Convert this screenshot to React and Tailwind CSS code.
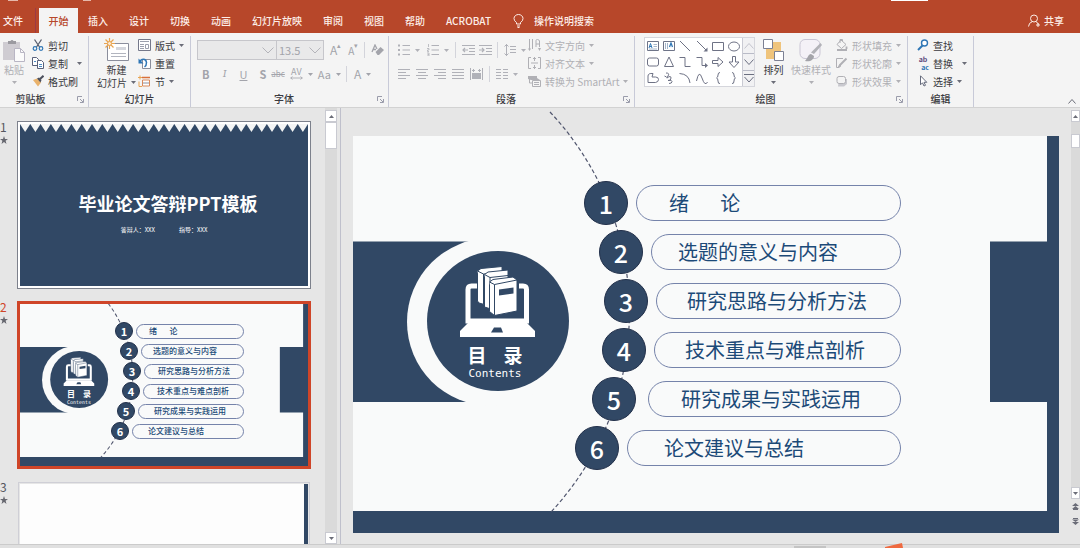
import React from "react";
import clsx from "clsx";

const TABS = ["插入", "设计", "切换", "动画", "幻灯片放映", "审阅", "视图", "帮助", "ACROBAT"];

// one entry per agenda line, with its place on the large slide and on the thumbnail
const AGENDA = [
  { text: "绪       论", row: "pl-[231px]", pill: "ml-2 pl-[32px]", miniRow: "pl-[95px]", miniPill: "pl-[12px]" },
  { text: "选题的意义与内容", row: "pl-[246px]", pill: "ml-2 pl-[26px]", miniRow: "pl-[100px]", miniPill: "pl-[11px]" },
  { text: "研究思路与分析方法", row: "pl-[251px]", pill: "ml-2 pl-[30px]", miniRow: "pl-[103px]", miniPill: "pl-[13px]" },
  { text: "技术重点与难点剖析", row: "pl-[249px]", pill: "ml-2 pl-[30px]", miniRow: "pl-[102px]", miniPill: "pl-[13px]" },
  { text: "研究成果与实践运用", row: "pl-[239px]", pill: "ml-3 pl-[32px]", miniRow: "pl-[97px]", miniPill: "pl-[15px]" },
  { text: "论文建议与总结", row: "pl-[222px]", pill: "ml-2 pl-[36px]", miniRow: "pl-[91px]", miniPill: "pl-[15px]" },
];

/* ---------- icons ---------- */

const Icon = ({ w = 12, h = 12, className, children }) => (
  <svg
    width={w}
    height={h}
    viewBox={`0 0 ${w} ${h}`}
    fill="none"
    stroke="currentColor"
    className={clsx("shrink-0", className)}
    aria-hidden="true"
  >
    {children}
  </svg>
);

const Caret = ({ className }) => (
  <Icon w={5} h={3} className={className}>
    <path d="M0 0h5L2.5 3z" fill="currentColor" stroke="none" />
  </Icon>
);

const CaretUp = () => (
  <Icon w={5} h={3}>
    <path d="M0 3h5L2.5 0z" fill="currentColor" stroke="none" />
  </Icon>
);

const PasteIcon = () => (
  <Icon w={24} h={25}>
    <path d="M1 4h17v18H1z" fill="#cfccd2" stroke="none" />
    <path d="M6 3h2.500a1.600 1.600 0 0 1 3 0H14v3H6z" fill="#9b9aa0" stroke="none" />
    <path d="M12.500 10.500h6l4 4v9h-10z" fill="#fbfbfb" stroke="#b9b6c4" />
    <path d="M18.500 10.500v4h4" stroke="#b9b6c4" />
  </Icon>
);

const CutIcon = () => (
  <Icon>
    <path d="M2.500 0.500 7.500 8M9.500 0.500 4.500 8" stroke="#5a6070" strokeWidth="1.300" />
    <circle cx="3" cy="9.500" r="1.800" stroke="#2f76b5" strokeWidth="1.200" />
    <circle cx="9" cy="9.500" r="1.800" stroke="#2f76b5" strokeWidth="1.200" />
  </Icon>
);

const CopyIcon = () => (
  <Icon>
    <path d="M.5.5h4l2 2v6h-6z" fill="#fff" stroke="#59617a" />
    <path d="M5.500 3.500h4l2 2v6h-6z" fill="#fff" stroke="#59617a" />
    <path d="M7 7.500h3M7 9.500h3M2 4.500h2" stroke="#4d8bc4" />
  </Icon>
);

const BrushIcon = () => (
  <Icon>
    <path d="M1 5 5 3.500 9 7.500 6 11.500z" fill="#e9b26b" stroke="none" />
    <path d="M5 3.500 7 2.500l2.500 2.500L8.500 7.500z" fill="#4b4f5c" stroke="none" />
    <path d="M8 4 11.500.8" stroke="#4b4f5c" strokeWidth="2" />
  </Icon>
);

const NewSlideIcon = () => (
  <Icon w={26} h={25}>
    <path d="M3.500 5.500h21v17h-21z" fill="#fff" stroke="#8b8e9c" />
    <path d="M12 9h10v3H12z" fill="#d5d7dd" stroke="none" />
    <path d="M7 15.500h15M7 18.500h15" stroke="#b2b5bf" />
    <path d="M5.500 0v11M0 5.500h11M1.500 1.500l8 8M9.500 1.500l-8 8" stroke="#e9a552" strokeWidth="1.200" />
    <circle cx="5.500" cy="5.500" r="2" fill="#fbe8cf" stroke="#e9a552" />
  </Icon>
);

const LayoutIcon = () => (
  <Icon w={13}>
    <path d="M.5.5h12v11H.5z" fill="#fff" stroke="#74788a" />
    <path d="M2 2.500h9M2 5.500h4M2 7.500h4M2 9.500h4" stroke="#9ca0ad" />
    <path d="M7.500 5.500h3v4h-3z" stroke="#9ca0ad" />
  </Icon>
);

const ResetIcon = () => (
  <Icon w={13}>
    <path d="M4.500 2.500h8v9h-8z" fill="#fff" stroke="#8b8e9c" />
    <path d="M2 5C3 1.500 8 1 8.500 5.500 8.500 7.500 8 9 6.500 10" stroke="#2f76b5" strokeWidth="1.500" />
    <path d="M.5 1.500v5h5z" fill="#2f76b5" stroke="none" />
  </Icon>
);

const SectionIcon = () => (
  <Icon w={13}>
    <path d="M4 2.500h8" stroke="#d9703c" strokeWidth="1.500" />
    <path d="M4.500 5h7v6h-7z" fill="#fff" stroke="#d98a5c" />
    <path d="M5 8h6" stroke="#8b8e9c" />
    <path d="M0 2.500h4M2 .5v4M1 6.500v5h3" stroke="#e9a552" />
  </Icon>
);

const EraserIcon = () => (
  <Icon w={13}>
    <path d="M1 8 4 1l2 4M2 5.500h3" strokeWidth="1.300" />
    <path d="m4.500 8 5-5L13 6l-5 5H6.500z" fill="currentColor" stroke="none" />
  </Icon>
);

const BulletsIcon = () => (
  <Icon>
    <path d="M4.500 1.500H12M4.500 6H12M4.500 10.500H12" />
    <path d="M0 1.500h2M0 6h2M0 10.500h2" strokeWidth="2" />
  </Icon>
);

const NumbersIcon = () => (
  <Icon>
    <path d="M4.500 1.500H12M4.500 6H12M4.500 10.500H12" />
    <path d="M1.500 0v3M0 4.500h2v1.500H.5v1.500H2M0 9h2v3H0M.5 10.500H2" strokeWidth=".8" />
  </Icon>
);

const IndentIcon = ({ out }) => (
  <Icon w={13}>
    <path d="M0 1.500h13M7 4.500h6M7 7.500h6M0 10.500h13" />
    <path d={out ? "M6 6H1M3 4 1 6l2 2" : "M0 6h5M3 4l2 2-2 2"} strokeWidth="1.200" />
  </Icon>
);

const SpacingIcon = () => (
  <Icon>
    <path d="M6 2.500h6M6 5.500h6M6 8.500h6" />
    <path d="M2.500 0v12M.5 2.500l2-2 2 2M.5 9.500l2 2 2-2" />
  </Icon>
);

const ALIGN_PATHS = {
  left: "M0 1.500h12M0 4.500h8M0 7.500h12M0 10.500h8",
  center: "M0 1.500h12M2 4.500h8M0 7.500h12M2 10.500h8",
  right: "M0 1.500h12M4 4.500h8M0 7.500h12M4 10.500h8",
  justify: "M0 1.500h12M0 4.500h12M0 7.500h12M0 10.500h12",
  columns: "M0 1.500h5M7 1.500h5M0 4.500h5M7 4.500h5M0 7.500h5M7 7.500h5M0 10.500h5M7 10.500h5",
};

const AlignIcon = ({ kind }) => (
  <Icon>
    <path d={ALIGN_PATHS[kind]} />
  </Icon>
);

const DistributeIcon = () => (
  <Icon w={13}>
    <path d="M.5 0v12M12.500 0v12M2 2.500h3M8 2.500h3M3.500 1v3M9.500 1v3" />
    <path d="M2 5h9v6H2z" fill="currentColor" stroke="none" />
  </Icon>
);

const TextDirIcon = () => (
  <Icon w={13}>
    <path d="M1.500 0v10M4.500 0v10M8 8V1.500Q8 .5 9.500.5T11.500 2v6M8 5h3.500" />
    <path d="M0 9.500h3L1.500 12zM10 9h3l-1.500 3z" fill="currentColor" stroke="none" />
  </Icon>
);

const AlignTextIcon = () => (
  <Icon w={13}>
    <path d="M3 .5H.5v11H3M10 .5h2.500v11H10" />
    <path d="M6.500 0v4M5 2l1.500-1.500L8 2M6.500 12V8M5 10l1.500 1.500L8 10M3 6h7" />
  </Icon>
);

const SmartArtIcon = () => (
  <Icon w={13}>
    <path d="M0 1h9v2l3 2H3L0 4z" fill="currentColor" stroke="none" />
    <path d="M4.500 5.500h8v6h-8z" fill="#f4f4f4" />
    <path d="M6 7.500h5M6 9.500h5M1.500 4v4H4" />
  </Icon>
);

const ArrangeIcon = () => (
  <Icon w={23} h={25}>
    <path d="M4 4h15v17H4z" fill="#efc47c" stroke="none" />
    <path d="M1.500 1.500h9v9h-9zM12.500 13.500h9v9h-9z" fill="#fff" stroke="#7c8092" />
  </Icon>
);

const QuickStyleIcon = () => (
  <Icon w={24} h={25}>
    <rect x="1" y="1.500" width="20" height="19" rx="5" fill="#f4f1f7" stroke="#c9c5d4" />
    <path d="m23 7-8 9-3-1.500L21.500 5z" fill="#b2b2b8" stroke="none" />
    <path d="M12 16c-3 0-3 4-6 7 5 1 9-1 9-5z" fill="#a4a4aa" stroke="none" />
  </Icon>
);

const FillIcon = () => (
  <Icon>
    <path d="m5 1 5 4.500-4.500 4L1 5.500zM4 4V.5h2.500V2" />
    <path d="M10.500 7.500V10M1 11h10" strokeWidth="1.800" />
  </Icon>
);

const OutlineIcon = () => (
  <Icon>
    <path d="M7 1.500H.5v9h3" />
    <path d="m4 8 6.500-6.500" strokeWidth="2" />
    <path d="m2.500 10 1-2.500L5 9z" fill="currentColor" />
  </Icon>
);

const EffectIcon = () => (
  <Icon>
    <path d="M3 4h8v5l-3 2.500H2z" fill="#c9c9cf" stroke="none" />
    <rect x="1" y="1.500" width="8.500" height="7" rx="2" fill="#f4f4f4" />
  </Icon>
);

const FindIcon = () => (
  <Icon>
    <circle cx="7.500" cy="4" r="3" stroke="#2f76b5" strokeWidth="1.400" fill="#fff" />
    <path d="M5.500 6.500 1 11" stroke="#2f76b5" strokeWidth="2" />
  </Icon>
);

const ReplaceIcon = () => (
  <span className="flex w-3 shrink-0 flex-col text-[7px] font-bold leading-[8px]" aria-hidden="true">
    <span className="text-[#5d4a7c]">ab</span>
    <span className="self-end text-[#2f76b5]">ac</span>
  </span>
);

const SelectIcon = () => (
  <Icon>
    <path d="M3.500.8v9l2-2L7 11l1.500-.7L7 7.300h2.800z" fill="#fff" stroke="#666b7c" />
  </Icon>
);

const GALLERY = [
  <><path d="M.5 1.500h11v9H.5z" stroke="#6e7488" /><path d="M2 8 3.500 3.500 5 8M2.500 6.500h2" stroke="#2f76b5" /><path d="M6.500 4.500H10M6.500 6.500H10M2 9h8" stroke="#8fa3be" strokeWidth=".8" /></>,
  <><path d="M.5 1.500h11v9H.5z" stroke="#6e7488" /><path d="M6.500 7 8 3l1.500 4" stroke="#2f76b5" strokeWidth="1.300" /><path d="M2.500 3v6M4.500 3v6" stroke="#8fa3be" strokeWidth=".8" /></>,
  <path d="m1 1 10 10" />,
  <><path d="m1 1 9 9" /><path d="M11.500 11.500v-4l-4 4z" fill="currentColor" stroke="none" /></>,
  <path d="M.5 2.500h11v8H.5z" />,
  <ellipse cx="6" cy="6.500" rx="5.500" ry="4.500" />,
  <rect x=".5" y="2" width="11" height="8" rx="2" />,
  <path d="m6 1 4.500 9.500h-9z" />,
  <path d="M.5 1.500H6v9h5.500" />,
  <><path d="M.5 1.500H6v8h4" /><path d="m9 7 3 2.500-3 2.500z" fill="currentColor" stroke="none" /></>,
  <path d="M.5 4.500H6V1.500l5 4.500-5 4.500V7.500H.5z" />,
  <path d="M4.500.5V6H1l5 5.500L11 6H7.500V.5z" />,
  <path d="M1 10.500V4Q1 1 6 1.500L5 5h3.500q3 0 3 2.500t-3 3z" />,
  <path d="M3 1q4 0 2 3T4 6q4-3 4 0T5 8.500q4-1 4 1T6 11.500M1.500 4l2 1" />,
  <path d="M.5 1.500Q10 2 11 11" />,
  <path d="M.5 9Q3-3 6 6t5.500 4" />,
  <path d="M8 .5Q6 .5 6 3t-1.500 3Q6 6 6 9t2 2.500" />,
  <path d="M4 .5Q6 .5 6 3t1.500 3Q6 6 6 9t-2 2.500" />,
];

/* ---------- ribbon ---------- */

const RibbonGroup = ({ label, width, launcher = true, labelClass, children }) => (
  <section aria-label={label} className={clsx("flex shrink-0 flex-col border-r border-[#c8cad8]", width)}>
    <div className="flex h-[57px] items-start">{children}</div>
    <div className="flex h-3 items-center">
      <h2 className={clsx("flex-1 text-center font-medium leading-3", labelClass)}>{label}</h2>
      {launcher && (
        <button aria-label={`${label}设置`} className="mr-1 text-[#9a9cab]">
          <Icon w={7} h={7}>
            <path d="M.5 5V.5H5M3 3l3 3M6.500 3v3.500H3" />
          </Icon>
        </button>
      )}
    </div>
  </section>
);

const BigButton = ({ icon, line1, line2, caret, disabled, className }) => (
  <button className={clsx("mt-[2px] flex shrink-0 flex-col items-center leading-[13px]", disabled && "text-[#b0b0b5]", className)}>
    {icon}
    <span>{line1}</span>
    <span className="flex h-[13px] items-center gap-1">
      {line2}
      {caret && <Caret className={disabled ? "text-[#b0b0b5]" : "text-[#6b6d78]"} />}
    </span>
  </button>
);

const SmallButton = ({ icon, label, caret, disabled, wide }) => (
  <button className={clsx("flex h-[18px] items-center gap-1 whitespace-nowrap", disabled && "text-[#b0b0b5]")}>
    {icon}
    <span>{label}</span>
    {caret && <Caret className={clsx(wide && "ml-[5px]", disabled ? "text-[#b0b0b5]" : "text-[#6b6d78]")} />}
  </button>
);

const Tool = ({ label, caret, className, children }) => (
  <button aria-label={label} className={clsx("flex h-4 items-center gap-[5px]", className)}>
    {children}
    {caret && <Caret />}
  </button>
);

const Rule = () => <span className="h-4 w-px bg-[#d3d4db]" />;

const Combo = ({ label, value, className }) => (
  <div className={clsx("relative h-5 border border-[#c6c6cb] bg-[#e9e9ea]", className)}>
    <select aria-label={label} className="h-full w-full appearance-none pl-[2px] text-[11px] leading-4 outline-none">
      <option>{value}</option>
    </select>
    <Icon w={12} h={7} className="pointer-events-none absolute right-[2px] top-[6px] text-[#b4b4ba]">
      <path d="m.5.5 5.500 5.500L11.500.5" />
    </Icon>
  </div>
);

const FontGroup = () => (
  <RibbonGroup label="字体" width="w-[198px]">
    <div className="flex flex-col gap-[6px] pl-[6px] pt-[4px] text-[#a3a4ab]">
      <div className="flex h-5 items-center">
        <Combo label="字体名称" value="" className="w-[80px]" />
        <Combo label="字号" value="13.5" className="w-[47px] border-l-0" />
        <Tool label="增大字号" className="ml-[6px]">
          <span className="text-[12px]">A</span>
          <span className="-ml-[5px] self-start text-[7px] leading-[7px]">▴</span>
        </Tool>
        <Tool label="减小字号" className="ml-[7px]">
          <span className="text-[10px]">A</span>
          <span className="-ml-[5px] self-start text-[7px] leading-[7px]">▾</span>
        </Tool>
        <span className="ml-[6px] mr-[6px] flex"><Rule /></span>
        <Tool label="清除格式"><EraserIcon /></Tool>
      </div>
      <div className="flex h-4 items-center pl-[5px] text-[11px]">
        <div className="flex items-center gap-3">
          <Tool label="加粗"><b>B</b></Tool>
          <Tool label="倾斜"><i className="w-[6px] font-serif">I</i></Tool>
          <Tool label="下划线"><u>U</u></Tool>
          <Tool label="阴影"><b>S</b></Tool>
        </div>
        <div className="flex items-center gap-[5px] pl-[5px]">
          <Tool label="删除线"><s className="text-[8px]">abc</s></Tool>
          <Tool label="字符间距" caret className="gap-[2px]">
            <span className="flex flex-col items-center text-[9px] leading-[8px]">
              AV
              <Icon w={13} h={4}>
                <path d="M.5 2h12M2.500.5.8 2l1.700 1.500M10.500.5 12.200 2l-1.700 1.500" strokeWidth=".8" />
              </Icon>
            </span>
          </Tool>
          <Tool label="更改大小写" caret className="gap-[3px]">Aa</Tool>
          <Rule />
        </div>
        <Tool label="字体颜色" caret className="gap-2 pl-[7px]"><span className="text-[12px]">A</span></Tool>
      </div>
    </div>
  </RibbonGroup>
);

const ParagraphGroup = () => (
  <RibbonGroup label="段落" width="w-[246px]">
    <div className="flex w-[139px] flex-col gap-[8px] pl-[9px] pt-[6px] text-[#b0b1b8]">
      <div className="flex h-4 items-center">
        <Tool label="项目符号" caret className="mr-[7px]"><BulletsIcon /></Tool>
        <Tool label="编号" caret className="mr-[6px]"><NumbersIcon /></Tool>
        <Rule />
        <Tool label="降低列表级别" className="ml-[6px]"><IndentIcon out /></Tool>
        <Tool label="提高列表级别" className="ml-1 mr-[5px]"><IndentIcon /></Tool>
        <Rule />
        <Tool label="行距" caret className="ml-[6px] gap-1"><SpacingIcon /></Tool>
      </div>
      <div className="flex h-4 items-center gap-[6px]">
        <Tool label="左对齐"><AlignIcon kind="left" /></Tool>
        <Tool label="居中"><AlignIcon kind="center" /></Tool>
        <Tool label="右对齐"><AlignIcon kind="right" /></Tool>
        <Tool label="两端对齐"><AlignIcon kind="justify" /></Tool>
        <Tool label="分散对齐"><DistributeIcon /></Tool>
        <Rule />
        <Tool label="分栏" caret><AlignIcon kind="columns" /></Tool>
      </div>
    </div>
    <div className="flex flex-col">
      <SmallButton icon={<TextDirIcon />} label="文字方向" caret disabled />
      <SmallButton icon={<AlignTextIcon />} label="对齐文本" caret disabled />
      <SmallButton icon={<SmartArtIcon />} label="转换为 SmartArt" caret disabled />
    </div>
  </RibbonGroup>
);

const DrawingGroup = () => (
  <RibbonGroup label="绘图" width="w-[273px]">
    <div className="ml-[9px] mt-px flex h-[50px] border border-[#d5d6dc] bg-white">
      <div className="grid w-[97px] grid-cols-6 place-items-center text-[#6e7285]">
        {GALLERY.map((shape, i) => (
          <button key={i} aria-label={`形状 ${i + 1}`}>
            <Icon>{shape}</Icon>
          </button>
        ))}
      </div>
      <div className="flex w-3 flex-col divide-y divide-[#b9bbc7] border-l border-[#c9cad3] bg-[#f1f1f3] text-[#6b6f80]">
        <button aria-label="上一行" className="flex flex-1 items-center justify-center text-[#c3c4cc]">
          <Icon w={10} h={6}><path d="m.5 5.500 4.500-5 4.500 5" /></Icon>
        </button>
        <button aria-label="下一行" className="flex flex-1 items-center justify-center">
          <Icon w={10} h={6}><path d="m.5.5 4.500 5 4.500-5" /></Icon>
        </button>
        <button aria-label="更多形状" className="flex flex-1 items-center justify-center">
          <Icon w={10} h={10}><path d="M0 1.500h10M.5 4l4.500 5 4.500-5" /></Icon>
        </button>
      </div>
    </div>
    <BigButton className="ml-[7px]" icon={<ArrangeIcon />} line1="排列" caret />
    <BigButton className="ml-[6px]" icon={<QuickStyleIcon />} line1="快速样式" caret disabled />
    <div className="ml-[5px] flex flex-col">
      <SmallButton icon={<FillIcon />} label="形状填充" caret disabled />
      <SmallButton icon={<OutlineIcon />} label="形状轮廓" caret disabled />
      <SmallButton icon={<EffectIcon />} label="形状效果" caret disabled />
    </div>
  </RibbonGroup>
);

const Ribbon = () => (
  <div className="flex h-[75px] shrink-0 overflow-hidden border-b border-[#d2d2d2] bg-[#f4f4f4] pt-[3px] text-[10px] text-[#3a3a40]">
    <RibbonGroup label="剪贴板" width="w-[89px]" labelClass="pr-4">
      <BigButton className="ml-[2px]" icon={<PasteIcon />} line1="粘贴" caret disabled />
      <div className="ml-[6px] flex flex-col">
        <SmallButton icon={<CutIcon />} label="剪切" />
        <SmallButton icon={<CopyIcon />} label="复制" caret wide />
        <SmallButton icon={<BrushIcon />} label="格式刷" />
      </div>
    </RibbonGroup>
    <RibbonGroup label="幻灯片" width="w-[102px]" launcher={false}>
      <BigButton className="ml-2" icon={<NewSlideIcon />} line1="新建" line2="幻灯片" caret />
      <div className="ml-[2px] flex flex-col">
        <SmallButton icon={<LayoutIcon />} label="版式" caret />
        <SmallButton icon={<ResetIcon />} label="重置" />
        <SmallButton icon={<SectionIcon />} label="节" caret />
      </div>
    </RibbonGroup>
    <FontGroup />
    <ParagraphGroup />
    <DrawingGroup />
    <RibbonGroup label="编辑" width="w-[66px]" launcher={false}>
      <div className="ml-[9px] flex flex-col">
        <SmallButton icon={<FindIcon />} label="查找" />
        <SmallButton icon={<ReplaceIcon />} label="替换" caret wide />
        <SmallButton icon={<SelectIcon />} label="选择" caret />
      </div>
    </RibbonGroup>
    <button aria-label="折叠功能区" className="ml-auto mr-1 self-end pb-[3px] text-[#6b6d78]">
      <Icon w={8} h={5}><path d="m.5 4.500 3.500-4 3.500 4" /></Icon>
    </button>
  </div>
);

const TitleBar = () => (
  <header className="flex h-[33px] shrink-0 flex-col bg-[#b7472a] text-[10px] font-medium text-[#fdeee8]">
    <div className="flex h-2 items-start">
      <span className="ml-2 h-px w-[10px] bg-[#e6b8aa]" />
      <span className="ml-[65px] h-px w-2 bg-[#e6b8aa]" />
      <span className="ml-auto mr-[152px] h-px w-[37px] bg-white" />
    </div>
    <nav className="flex flex-1 items-stretch">
      <button className="px-[3px]">文件</button>
      <span className="ml-[9px] mr-[3px] w-px bg-[#9c3a45]" />
      <button className="w-[39px] bg-[#f4f4f4] text-[#b7472a]">开始</button>
      <div className="flex gap-px">
        {TABS.map((tab) => (
          <button key={tab} className="px-[10px]">{tab}</button>
        ))}
      </div>
      <button className="ml-3 flex items-center gap-[10px]">
        <Icon w={11} h={14}>
          <path d="M3.500 10V8.500Q1 7 1 4.500a4.500 4 0 0 1 9 0Q10 7 7.500 8.500V10zM4 12h3M4.500 13.500h2" />
        </Icon>
        操作说明搜索
      </button>
      <button className="ml-auto mr-4 flex items-center gap-1">
        <Icon w={12} h={13}>
          <circle cx="6" cy="4.500" r="3.500" />
          <path d="M.5 12.500Q1 8.500 4 7.800M8 7.800q2 .7 2.500 2.700M8 11h4M10 9v4" />
        </Icon>
        共享
      </button>
    </nav>
  </header>
);

/* ---------- slides ---------- */

const AgendaArt = ({ mini }) => (
  <svg viewBox="0 0 706 397" className="absolute inset-0 h-full w-full overflow-visible" aria-hidden="true">
    <g fill="#314865">
      <path d="M0 105.500h118V266H0z" />
      <path d="M637 105.500h57V0h12v397H0V375h694V266h-57z" />
    </g>
    <circle cx="138" cy="186" r="84" fill="#f9fafa" />
    <ellipse cx="145" cy="185" rx="71" ry="70" fill="#314865" />
    <path
      d="M197-24A293 293 0 0 1 198 376"
      fill="none"
      stroke="#51566e"
      strokeWidth={mini ? 2.5 : 1.2}
      strokeDasharray={mini ? "9 6" : "4 2.500"}
    />
    {/* laptop */}
    <path d="M125 150h-6.500q-3.500 0-3.500 3.500V185h58.500v-31.500q0-3.500-3.500-3.500h-4" fill="none" stroke="#fff" strokeWidth="5" />
    <path d="M115 187h59l8 8v6h-75v-6z" fill="#fff" />
    <path d="M141 191.500h7l2 5h-12z" fill="#314865" />
    {/* books, back to front */}
    <g fill="#fff" stroke="#314865" strokeWidth="1">
      <path d="m124.500 135 3.500-2.500 21-2 .5 34L133 169l-7-2-1.500-2z" />
      <path d="m124.500 135 6 3v30M130.500 138l19-2" />
      <path d="m131.500 138.500 3.500-2.500 20-2v36l-14 4-9.500-3z" />
      <path d="m131.500 138.500 5.500 3V171M137 141.500l18-2" />
      <path d="m136.500 146 3.500-2.500 20-2.500 4 3V175l-22.500 4.500-5-4z" />
      <path d="m136.500 146 5 2.500v31M141.500 148.500 164 144" />
    </g>
    <path d="m146 153.500 14.500-2v6l-14.500 2z" fill="#314865" />
  </svg>
);

const AgendaSlide = ({ mini }) => (
  <article
    className={clsx(
      "relative bg-[#f9fafa] text-[#1c4a78]",
      mini ? "h-[162px] w-[288px] overflow-hidden pt-[18px]" : "h-[397px] w-[706px] shrink-0 pt-[45px]"
    )}
  >
    <AgendaArt mini={mini} />
    <div
      className={clsx(
        "absolute flex flex-col items-center whitespace-pre text-white",
        mini ? "left-[37px] top-[85px] w-[44px]" : "left-[82px] top-[207px] w-[120px]"
      )}
    >
      <h3 className={clsx("flex font-bold", mini ? "gap-2 text-[8px] leading-[10px]" : "gap-[17px] text-[19px] leading-6")}>
        <span>目</span>
        <span>录</span>
      </h3>
      <p className={clsx("font-['DejaVu_Sans_Mono',monospace]", mini ? "text-[5px] leading-[6px]" : "text-[11px] leading-[14px]")}>
        Contents
      </p>
    </div>
    <ol className={clsx("relative flex flex-col", mini ? "w-[224px] gap-[2px]" : "w-[548px] gap-[5px]")}>
      {AGENDA.map((item, i) => (
        <li key={item.text} className={clsx("flex items-center", mini ? item.miniRow : item.row)}>
          <span
            className={clsx(
              "flex shrink-0 items-center justify-center rounded-full border border-[#22304a] bg-[#314865] text-white",
              mini ? "size-[18px] text-[11px] font-bold leading-none" : "size-11 text-[25px] font-medium leading-none"
            )}
          >
            {i + 1}
          </span>
          <span
            className={clsx(
              "flex flex-1 items-center whitespace-pre rounded-full border border-[#7583aa]",
              mini ? "ml-[3px] h-[15px] text-[8px] font-medium" : "h-9 text-[20px]",
              mini ? item.miniPill : item.pill
            )}
          >
            {item.text}
          </span>
        </li>
      ))}
    </ol>
  </article>
);

const CoverSlide = () => (
  <article className="h-[162px] w-[288px] bg-[#314865] text-white">
    <svg viewBox="0 0 280 8" preserveAspectRatio="none" className="h-2 w-full" aria-hidden="true">
      {Array.from({ length: 28 }, (_, i) => (
        <path key={i} d={`M${i * 10} 0h10l-5 8z`} fill="#f4f5f5" />
      ))}
    </svg>
    <h3 className="pl-2 pt-[59px] text-center text-[18px] font-bold leading-6">毕业论文答辩PPT模板</h3>
    <p className="flex justify-center gap-6 pt-[10px] text-[6px] leading-[10px]">
      <span>答辩人：XXX</span>
      <span>指导：XXX</span>
    </p>
  </article>
);

const BlankSlide = () => (
  <article className="flex h-[162px] w-[288px] justify-end bg-[#fdfdfd]">
    <span className="w-1 bg-[#314865]" />
  </article>
);

const THUMBS = [
  { slide: <CoverSlide />, frame: "border-white outline outline-1 -outline-offset-1 outline-[#7d818c]" },
  { slide: <AgendaSlide mini />, frame: "border-[#cf4528]", active: true },
  { slide: <BlankSlide />, frame: "border-[#e6e6e6] outline outline-1 -outline-offset-2 outline-[#cfcfd6]" },
];

const ThumbnailPane = () => (
  <aside className="w-[325px] shrink-0 overflow-hidden pt-[13px]">
    <ol className="flex flex-col gap-3">
      {THUMBS.map((thumb, i) => (
        <li key={i} className="flex">
          <div className={clsx("w-[17px] shrink-0 text-[12px]", thumb.active ? "text-[#cf4528]" : "text-[#55565e]")}>
            <p className="leading-[11px]">{i + 1}</p>
            <Icon w={8} h={8} className="mt-[4px] text-[#66676f]">
              <path d="m4 0 1 3h3L5.600 4.800 6.500 8 4 6 1.500 8l.9-3.200L0 3h3z" fill="currentColor" stroke="none" />
            </Icon>
          </div>
          <div className={clsx("border-[3px]", thumb.frame)}>{thumb.slide}</div>
        </li>
      ))}
    </ol>
  </aside>
);

const ScrollButton = ({ label, children }) => (
  <button aria-label={label} className="flex h-3 w-full shrink-0 items-center justify-center border border-[#c9cad1] bg-white text-[#6b6d78]">
    {children}
  </button>
);

const App = () => (
  <div className="flex h-screen flex-col overflow-hidden bg-[#e6e6e6] font-['Noto_Sans_CJK_SC',sans-serif]">
    <TitleBar />
    <Ribbon />
    <div className="flex min-h-0 flex-1">
      <ThumbnailPane />
      <div className="flex w-3 shrink-0 flex-col bg-[#dadada] pt-[2px]">
        <ScrollButton label="向上滚动"><CaretUp /></ScrollButton>
        <span className="h-[27px] border border-[#c9cad1] bg-white" />
        <span className="flex-1" />
        <ScrollButton label="向下滚动"><Caret /></ScrollButton>
      </div>
      <main className="ml-[3px] flex min-w-0 flex-1 justify-center overflow-hidden border-l border-[#bfc0cc] pt-7">
        <AgendaSlide />
      </main>
      <div className="flex w-[9px] shrink-0 flex-col pt-[2px] text-[#6b6d78]">
        <ScrollButton label="向上滚动"><CaretUp /></ScrollButton>
        <div className="flex-1 bg-[#dadada] pt-3">
          <span className="block h-[14px] border border-[#c9cad1] bg-white" />
        </div>
        <ScrollButton label="向下滚动"><Caret /></ScrollButton>
        <div className="flex h-[45px] flex-col items-center gap-2 pt-1">
          <button aria-label="上一张幻灯片">
            <Icon w={7} h={7}><path d="M0 3 3.500 0 7 3zM0 6 3.500 3 7 6z" fill="currentColor" stroke="none" /><path d="M1 6.500h5" /></Icon>
          </button>
          <button aria-label="下一张幻灯片">
            <Icon w={7} h={7}><path d="M1 .5h5" /><path d="M0 1.500h7L3.500 4zM0 4h7L3.500 7z" fill="currentColor" stroke="none" /></Icon>
          </button>
        </div>
      </div>
    </div>
    <footer className="flex h-1 shrink-0 items-end border-t border-[#cbcbcb] bg-[#e0e0e0]">
      <span className="ml-auto h-[2px] w-8 bg-[#c4c4c4]" />
      <svg viewBox="0 0 18 5" className="-mt-2 ml-[59px] mr-[177px] h-[5px] w-[18px] shrink-0" aria-hidden="true">
        <path d="M0 4 17 0l1 5H0z" fill="#ef6a40" />
      </svg>
    </footer>
  </div>
);

export default App;
